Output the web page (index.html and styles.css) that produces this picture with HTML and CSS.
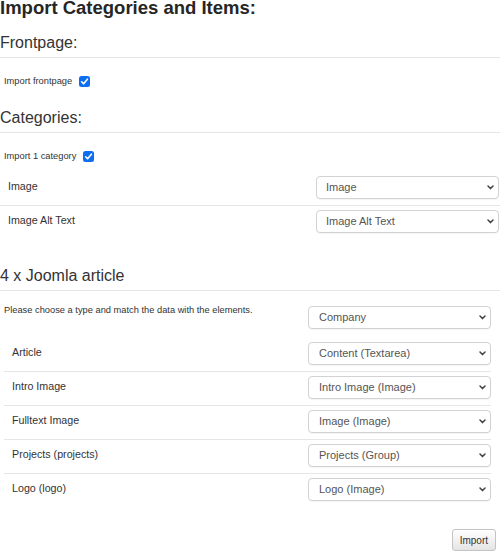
FILE: index.html
```html
<!DOCTYPE html>
<html lang="en">
<head>
<meta charset="utf-8">
<title>Import Categories and Items</title>
<link rel="stylesheet" href="styles.css">
</head>
<body>
<h1 class="title">Import Categories and Items:</h1>

<h2 class="section-heading first">Frontpage:</h2>
<div class="check-row">
  <span class="check-label">Import frontpage</span>
  <span class="checkbox"><svg viewBox="0 0 11 11" width="11" height="11"><rect width="11" height="11" rx="2.5" fill="#0d6ff0"/><path d="M2.6 5.8 L4.6 7.8 L8.4 3.2" fill="none" stroke="#fff" stroke-width="1.6" stroke-linecap="round" stroke-linejoin="round"/></svg></span>
</div>

<h2 class="section-heading">Categories:</h2>
<div class="check-row">
  <span class="check-label">Import 1 category</span>
  <span class="checkbox"><svg viewBox="0 0 11 11" width="11" height="11"><rect width="11" height="11" rx="2.5" fill="#0d6ff0"/><path d="M2.6 5.8 L4.6 7.8 L8.4 3.2" fill="none" stroke="#fff" stroke-width="1.6" stroke-linecap="round" stroke-linejoin="round"/></svg></span>
</div>
<div class="field-list cat-fields">
  <div class="field-row">
    <span class="field-label">Image</span>
    <div class="select"><span class="select-text">Image</span><svg class="chev" viewBox="0 0 7 5" width="7" height="5"><path d="M1 1 L3.5 3.6 L6 1" fill="none" stroke="#444" stroke-width="1.5" stroke-linecap="round" stroke-linejoin="round"/></svg></div>
  </div>
  <div class="field-row">
    <span class="field-label">Image Alt Text</span>
    <div class="select"><span class="select-text">Image Alt Text</span><svg class="chev" viewBox="0 0 7 5" width="7" height="5"><path d="M1 1 L3.5 3.6 L6 1" fill="none" stroke="#444" stroke-width="1.5" stroke-linecap="round" stroke-linejoin="round"/></svg></div>
  </div>
</div>

<h2 class="section-heading">4 x Joomla article</h2>
<div class="article-block">
  <div class="type-row">
    <p class="hint">Please choose a type and match the data with the elements.</p>
    <div class="select type-select"><span class="select-text">Company</span><svg class="chev" viewBox="0 0 7 5" width="7" height="5"><path d="M1 1 L3.5 3.6 L6 1" fill="none" stroke="#444" stroke-width="1.5" stroke-linecap="round" stroke-linejoin="round"/></svg></div>
  </div>
  <div class="field-list">
    <div class="field-row">
      <span class="field-label">Article</span>
      <div class="select"><span class="select-text">Content (Textarea)</span><svg class="chev" viewBox="0 0 7 5" width="7" height="5"><path d="M1 1 L3.5 3.6 L6 1" fill="none" stroke="#444" stroke-width="1.5" stroke-linecap="round" stroke-linejoin="round"/></svg></div>
    </div>
    <div class="field-row">
      <span class="field-label">Intro Image</span>
      <div class="select"><span class="select-text">Intro Image (Image)</span><svg class="chev" viewBox="0 0 7 5" width="7" height="5"><path d="M1 1 L3.5 3.6 L6 1" fill="none" stroke="#444" stroke-width="1.5" stroke-linecap="round" stroke-linejoin="round"/></svg></div>
    </div>
    <div class="field-row">
      <span class="field-label">Fulltext Image</span>
      <div class="select"><span class="select-text">Image (Image)</span><svg class="chev" viewBox="0 0 7 5" width="7" height="5"><path d="M1 1 L3.5 3.6 L6 1" fill="none" stroke="#444" stroke-width="1.5" stroke-linecap="round" stroke-linejoin="round"/></svg></div>
    </div>
    <div class="field-row">
      <span class="field-label">Projects (projects)</span>
      <div class="select"><span class="select-text">Projects (Group)</span><svg class="chev" viewBox="0 0 7 5" width="7" height="5"><path d="M1 1 L3.5 3.6 L6 1" fill="none" stroke="#444" stroke-width="1.5" stroke-linecap="round" stroke-linejoin="round"/></svg></div>
    </div>
    <div class="field-row">
      <span class="field-label">Logo (logo)</span>
      <div class="select"><span class="select-text">Logo (Image)</span><svg class="chev" viewBox="0 0 7 5" width="7" height="5"><path d="M1 1 L3.5 3.6 L6 1" fill="none" stroke="#444" stroke-width="1.5" stroke-linecap="round" stroke-linejoin="round"/></svg></div>
    </div>
  </div>
</div>

<div class="actions">
  <button class="btn" type="button">Import</button>
</div>
</body>
</html>
```
FILE: styles.css
```css
html, body {
  margin: 0;
  padding: 0;
  background: #fff;
}
body {
  font-family: "Liberation Sans", Arial, Helvetica, sans-serif;
  color: #333;
  width: 500px;
  overflow: hidden;
}
.title {
  margin: 0;
  font-size: 18.5px;
  line-height: 18px;
  font-weight: bold;
  color: #262626;
  margin-top: -1px;
}
.section-heading {
  margin: 19.5px 0 0;
  font-size: 16px;
  line-height: 21px;
  font-weight: normal;
  color: #333;
  padding-bottom: 4px;
  border-bottom: 1px solid #e6e6e6;
}
.section-heading.first {
  margin-top: 15px;
}
.check-row {
  display: flex;
  align-items: flex-start;
  margin-top: 16.5px;
  padding-left: 4px;
  height: 13px;
}
.check-label {
  font-size: 9.3px;
  line-height: 13px;
  color: #333;
}
.checkbox {
  display: block;
  width: 11px;
  height: 11px;
  margin-left: 7px;
  margin-top: 1.5px;
}
.checkbox svg {
  display: block;
}
.field-list {
  display: flex;
  flex-direction: column;
}
.cat-fields {
  margin-top: 9.5px;
  padding-bottom: 6.5px;
}
.field-row {
  display: flex;
  align-items: flex-start;
  padding: 4px 0 6px;
  border-bottom: 1px solid #e6e6e6;
}
.field-row:last-child {
  border-bottom: none;
}
.field-label {
  padding-left: 8px;
  padding-top: 3px;
  font-size: 10.7px;
  line-height: 14px;
  color: #333;
}
.select {
  margin-left: auto;
  width: 183px;
  height: 23px;
  box-sizing: border-box;
  display: flex;
  align-items: center;
  padding: 0 4px 0 9px;
  border: 1px solid #d2d2d2;
  border-radius: 4px;
  background: #fff;
  box-shadow: 0 1px 1px rgba(0, 0, 0, 0.04);
}
.cat-fields .select {
  margin-right: 1px;
}
.select-text {
  flex: 1;
  font-size: 11px;
  line-height: 21px;
  color: #555;
  white-space: nowrap;
}
.chev {
  display: block;
  flex: none;
}
.article-block {
  padding: 0 9px 0 4px;
}
.type-row {
  display: flex;
  align-items: flex-start;
  margin-top: 13px;
  padding-bottom: 9px;
}
.hint {
  margin: 0;
  font-size: 9.3px;
  line-height: 13px;
  color: #333;
  white-space: nowrap;
}
.type-select {
  margin-top: 2px;
}
.article-block .select-text {
  padding-left: 1px;
}
.actions {
  display: flex;
  justify-content: flex-end;
  margin-top: 22px;
  padding-right: 4px;
}
.btn {
  height: 22px;
  padding: 0 7px;
  font-family: "Liberation Sans", Arial, sans-serif;
  font-size: 10px;
  color: #333;
  background: linear-gradient(#ffffff, #e4e4e4);
  border: 1px solid #c4c4c4;
  border-radius: 3px;
}
```
